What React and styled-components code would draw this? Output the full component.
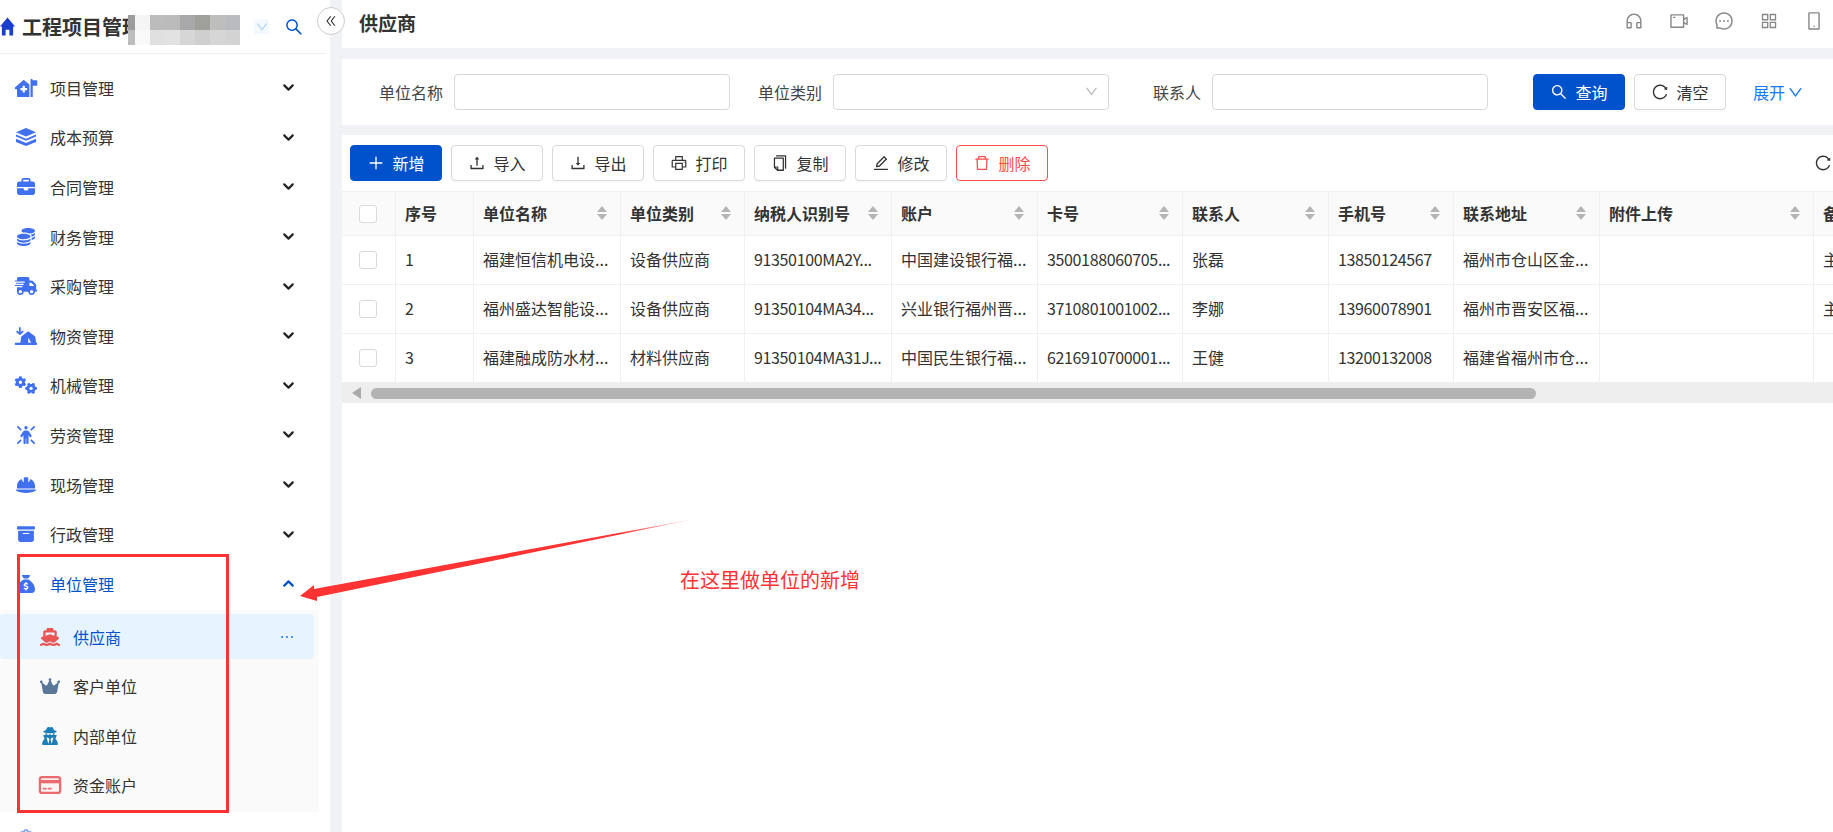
import React from 'react';
import styled, { createGlobalStyle } from 'styled-components';
import {
    AiOutlineCopy, AiOutlineCustomerService, AiOutlineDelete, AiOutlineDoubleLeft, AiOutlineDown,
    AiOutlineDownload, AiOutlineEdit, AiOutlineEllipsis, AiOutlineMessage, AiOutlineMobile, AiOutlinePlus,
    AiOutlinePrinter, AiOutlineReload, AiOutlineSearch, AiOutlineAppstore, AiOutlineUpload, AiOutlineVideoCamera,
} from 'react-icons/ai';
import {
    FaBoxArchive, FaBriefcase, FaClipboard, FaCoins, FaCrown, FaGears, FaHelmetSafety,
    FaHouseMedicalFlag, FaPersonRays, FaSackDollar, FaShip, FaTentArrowDownToLine, FaTruckFast,
    FaUserSecret,
} from 'react-icons/fa6';
import { ChevronDown, ChevronUp } from 'lucide-react';

const HomeGlyph = () => (
    <svg viewBox="0 0 16 19">
        <path d="M8 0 16 9.5H14V19H10V13H6V19H2V9.5H0Z" fill="currentColor" />
    </svg>
);

const BudgetGlyph = () => (
    <svg viewBox="0 0 21 18">
        <path d="M10.5 0 20.5 4.2 10.5 8.4 .5 4.2Z" fill="currentColor" />
        <path d="M.5 6.6 10.5 10.8 20.5 6.6V8.6L10.5 12.8 .5 8.6Z" fill="currentColor" />
        <path d="M.5 10.8 10.5 15 20.5 10.8V14L10.5 18 .5 14Z" fill="currentColor" />
    </svg>
);

const CardGlyph = () => (
    <svg viewBox="0 0 20 16">
        <rect x="1" y="1" width="18" height="14" rx="2" fill="#fdf3f3" stroke="currentColor" strokeWidth="2" />
        <rect x="1" y="3.5" width="18" height="3" fill="currentColor" />
        <rect x="3.5" y="10.5" width="3.5" height="1.5" fill="currentColor" />
        <rect x="8" y="10.5" width="3.5" height="1.5" fill="currentColor" />
    </svg>
);

const menus = [
    { label: '项目管理', icon: FaHouseMedicalFlag },
    { label: '成本预算', icon: BudgetGlyph },
    { label: '合同管理', icon: FaBriefcase },
    { label: '财务管理', icon: FaCoins },
    { label: '采购管理', icon: FaTruckFast },
    { label: '物资管理', icon: FaTentArrowDownToLine },
    { label: '机械管理', icon: FaGears },
    { label: '劳资管理', icon: FaPersonRays },
    { label: '现场管理', icon: FaHelmetSafety },
    { label: '行政管理', icon: FaBoxArchive },
];

const subMenus = [
    { label: '供应商', icon: FaShip, color: '#ea5455', active: true },
    { label: '客户单位', icon: FaCrown, color: '#5a7699' },
    { label: '内部单位', icon: FaUserSecret, color: '#1a7fb8' },
    { label: '资金账户', icon: CardGlyph, color: '#e96a6f' },
];

const mosaic = [
    '#9c9c9c', '#f5f5f5', '#bcbcbc', '#bbbbbb', '#a8a8aa', '#a0a09a', '#bebebc', '#b9bbc0',
    '#bdbdbd', '#f9f9f9', '#e0e0e0', '#e2e2e2', '#d6d6d6', '#cfcfcf', '#d6d6d6', '#d3d3d3',
];

const toolButtons = [
    { label: '导入', icon: AiOutlineUpload },
    { label: '导出', icon: AiOutlineDownload },
    { label: '打印', icon: AiOutlinePrinter },
    { label: '复制', icon: AiOutlineCopy },
    { label: '修改', icon: AiOutlineEdit },
];

const columns = [
    { title: '序号', width: 78 },
    { title: '单位名称', width: 147, sort: true },
    { title: '单位类别', width: 124, sort: true },
    { title: '纳税人识别号', width: 147, sort: true },
    { title: '账户', width: 146, sort: true },
    { title: '卡号', width: 145, sort: true },
    { title: '联系人', width: 146, sort: true },
    { title: '手机号', width: 125, sort: true },
    { title: '联系地址', width: 146, sort: true },
    { title: '附件上传', width: 214, sort: true },
    { title: '备注', width: 146 },
];

const rows = [
    ['1', '福建恒信机电设...', '设备供应商', '91350100MA2Y...', '中国建设银行福...', '3500188060705...', '张磊', '13850124567', '福州市仓山区金...', '', '主要'],
    ['2', '福州盛达智能设...', '设备供应商', '91350104MA34...', '兴业银行福州晋...', '3710801001002...', '李娜', '13960078901', '福州市晋安区福...', '', '主要'],
    ['3', '福建融成防水材...', '材料供应商', '91350104MA31J...', '中国民生银行福...', '6216910700001...', '王健', '13200132008', '福建省福州市仓...', '', ''],
];

export default function App() {
    return (
        <Page>
            <GlobalStyle />
            <Sidebar>
                <Brand>
                    <BrandHome><HomeGlyph /></BrandHome>
                    <BrandTitle>工程项目管理</BrandTitle>
                    <Mosaic>
                        {mosaic.map((c, i) => <MosaicCell key={i} $color={c} />)}
                    </Mosaic>
                    <BrandChevron><AiOutlineDown /></BrandChevron>
                    <BrandSearch><AiOutlineSearch /></BrandSearch>
                </Brand>
                <Menu>
                    {menus.map(m => (
                        <MenuRow key={m.label}>
                            <MenuIcon><m.icon /></MenuIcon>
                            <MenuText>{m.label}</MenuText>
                            <ChevronDown size={17} strokeWidth={3} color="#222" />
                        </MenuRow>
                    ))}
                    <MenuRow $open>
                        <MenuIcon><FaSackDollar /></MenuIcon>
                        <MenuText>单位管理</MenuText>
                        <ChevronUp size={17} strokeWidth={3} color="#0052cc" />
                    </MenuRow>
                    <SubList>
                        {subMenus.map(s => (
                            <SubRow key={s.label} $active={s.active}>
                                <SubIcon $color={s.color}><s.icon /></SubIcon>
                                <MenuText>{s.label}</MenuText>
                                {s.active && <SubMore><AiOutlineEllipsis /></SubMore>}
                            </SubRow>
                        ))}
                    </SubList>
                    <LastIcon><FaClipboard /></LastIcon>
                </Menu>
            </Sidebar>
            <Main>
                <TopBar>
                    <PageTitle>供应商</PageTitle>
                    <TopIcons>
                        <AiOutlineCustomerService />
                        <AiOutlineVideoCamera />
                        <AiOutlineMessage />
                        <AiOutlineAppstore />
                        <AiOutlineMobile />
                    </TopIcons>
                </TopBar>
                <FilterCard>
                    <FormItem>
                        <FormLabel>单位名称</FormLabel>
                        <FormInput />
                    </FormItem>
                    <FormItem>
                        <FormLabel>单位类别</FormLabel>
                        <FormInput as="div">
                            <SelectArrow><AiOutlineDown /></SelectArrow>
                        </FormInput>
                    </FormItem>
                    <FormItem>
                        <FormLabel>联系人</FormLabel>
                        <FormInput />
                    </FormItem>
                    <QueryButton $primary><AiOutlineSearch />查询</QueryButton>
                    <Button><AiOutlineReload />清空</Button>
                    <Expand>展开<AiOutlineDown /></Expand>
                </FilterCard>
                <TablePanel>
                    <Toolbar>
                        <Button $primary><AiOutlinePlus />新增</Button>
                        {toolButtons.map(b => (
                            <Button key={b.label}><b.icon />{b.label}</Button>
                        ))}
                        <Button $danger><AiOutlineDelete />删除</Button>
                        <ToolRefresh><AiOutlineReload /></ToolRefresh>
                    </Toolbar>
                    <TableClip>
                        <Table>
                            <colgroup>
                                <col style={{ width: 54 }} />
                                {columns.map(c => <col key={c.title} style={{ width: c.width }} />)}
                            </colgroup>
                            <thead>
                                <tr>
                                    <HeadCell><CheckBox /></HeadCell>
                                    {columns.map(c => (
                                        <HeadCell key={c.title}>
                                            <HeadInner>
                                                {c.title}
                                                {c.sort && <Sorter><SortUp /><SortDown /></Sorter>}
                                            </HeadInner>
                                        </HeadCell>
                                    ))}
                                </tr>
                            </thead>
                            <tbody>
                                {rows.map(r => (
                                    <tr key={r[0]}>
                                        <BodyCell><CheckBox /></BodyCell>
                                        {r.map((v, i) => <BodyCell key={i} $digits={/^\d/.test(v)}>{v}</BodyCell>)}
                                    </tr>
                                ))}
                            </tbody>
                        </Table>
                    </TableClip>
                    <ScrollTrack>
                        <ScrollArrow />
                        <ScrollThumb />
                    </ScrollTrack>
                </TablePanel>
            </Main>
            <CollapseButton><AiOutlineDoubleLeft /></CollapseButton>
            <RedBox />
            <ArrowDrawing viewBox="0 0 1833 832">
                <defs>
                    <linearGradient id="tail" gradientUnits="userSpaceOnUse" x1="300" y1="596" x2="700" y2="518">
                        <stop offset="0.8" stopColor="#f33" />
                        <stop offset="1" stopColor="#f33" stopOpacity="0" />
                    </linearGradient>
                </defs>
                <polygon points="300,596 314,585 314,589 700,518 317,597 317,601" fill="url(#tail)" />
            </ArrowDrawing>
            <Note>在这里做单位的新增</Note>
        </Page>
    );
}

const GlobalStyle = createGlobalStyle`
html, body {
    margin: 0;
    height: 100%;
    overflow: hidden;
    background: #fff;
}
* {
    box-sizing: border-box;
}
`

const Page = styled.div`
position: relative;
display: flex;
width: 100vw;
height: 100vh;
overflow: hidden;
font-family: "Noto Sans CJK SC", "Noto Sans", sans-serif;
font-size: 16px;
color: #333;
`

const Sidebar = styled.div`
flex: 0 0 330px;
height: 100%;
overflow: hidden;
background: #fff;
`

const Brand = styled.div`
position: relative;
display: flex;
align-items: center;
width: 326px;
height: 54px;
border-bottom: 1px solid #f0f0f0;
`

const BrandHome = styled.span`
display: flex;
flex: 0 0 22px;
color: #1a3fd0;
svg {
    width: 15px;
    height: 19px;
}
`

const BrandTitle = styled.span`
flex: 1;
font-size: 20px;
font-weight: 700;
color: #333;
white-space: nowrap;
`

const Mosaic = styled.div`
position: absolute;
left: 128px;
top: 15px;
display: grid;
grid-template-columns: 7px repeat(7, 15px);
grid-auto-rows: 15px;
`

const MosaicCell = styled.div`
background: ${props => props.$color};
`

const BrandChevron = styled.span`
display: flex;
align-items: center;
justify-content: center;
width: 15px;
height: 15px;
margin-right: 15px;
font-size: 14px;
color: #a8d0f5;
background: #f3f9ff;
`

const BrandSearch = styled.span`
display: flex;
margin-right: 22px;
font-size: 20px;
color: #0052cc;
`

const Menu = styled.div`
padding-top: 9px;
width: 319px;
`

const MenuRow = styled.div`
display: flex;
align-items: center;
height: 49.6px;
padding: 0 22px 0 14px;
color: ${props => props.$open ? '#0052cc' : '#333'};
`

const MenuIcon = styled.span`
display: flex;
justify-content: center;
flex: 0 0 24px;
margin-right: 13px;
color: #4070f0;
svg {
    width: 24px;
    height: 18px;
}
`

const MenuText = styled.span`
flex: 1;
line-height: 20px;
margin-left: -1px;
`

const SubList = styled.div`
margin-top: 1.4px;
padding: 4px 5px 4px 0;
height: 202px;
background: #fafafa;
`

const SubRow = styled.div`
display: flex;
align-items: center;
height: 45px;
margin-bottom: 4.4px;
padding: 1px 18px 0 38px;
border-radius: 4px;
color: ${props => props.$active ? '#0052cc' : '#333'};
background: ${props => props.$active ? '#e6f4ff' : 'transparent'};
`

const SubIcon = styled.span`
display: flex;
justify-content: center;
flex: 0 0 24px;
margin-right: 12px;
color: ${props => props.$color};
svg {
    width: 24px;
    height: 18px;
}
`

const SubMore = styled.span`
display: flex;
font-size: 18px;
color: #1677ff;
`

const LastIcon = styled.div`
display: flex;
padding: 17px 0 0 18px;
font-size: 16px;
color: #8ea9f0;
`

const Main = styled.div`
flex: 1;
min-width: 0;
display: flex;
flex-direction: column;
height: 100%;
border-left: 12px solid #f0f2f5;
background: #f0f2f5;
`

const TopBar = styled.div`
display: flex;
align-items: center;
justify-content: space-between;
flex: 0 0 48px;
padding: 0 9px 4px 17px;
background: #fff;
`

const PageTitle = styled.div`
font-size: 19px;
font-weight: 700;
color: #333;
`

const TopIcons = styled.div`
display: flex;
align-items: center;
gap: 25px;
margin-top: -2px;
font-size: 20px;
color: #888;
`

const FilterCard = styled.div`
display: flex;
align-items: center;
flex: 0 0 66px;
margin-top: 11px;
padding-left: 9px;
background: #fff;
`

const FormItem = styled.div`
display: flex;
align-items: center;
width: 379px;
`

const FormLabel = styled.label`
flex: 1;
margin-right: 11px;
text-align: right;
color: #444;
`

const FormInput = styled.input`
position: relative;
flex: 0 0 276px;
height: 36px;
padding: 0 10px;
border: 1px solid #d9d9d9;
border-radius: 4px;
background: #fff;
outline: none;
`

const SelectArrow = styled.span`
position: absolute;
right: 9px;
top: 9px;
display: flex;
font-size: 15px;
color: #bbb;
`

const Button = styled.div`
display: flex;
align-items: center;
justify-content: center;
gap: 7px;
flex: 0 0 92px;
height: 36px;
padding-bottom: 1px;
border: 1px solid ${props => props.$primary ? '#0052cc' : props.$danger ? '#ff4d4f' : '#d9d9d9'};
border-radius: 4px;
color: ${props => props.$primary ? '#fff' : props.$danger ? '#ff4d4f' : '#333'};
background: ${props => props.$primary ? '#0052cc' : '#fff'};
box-shadow: 0 2px 0 rgba(0, 0, 0, 0.02);
font-size: 16px;
svg {
    font-size: 18px;
}
`

const QueryButton = styled(Button)`
margin: 0 9px 0 45px;
`

const Expand = styled.div`
display: flex;
align-items: center;
gap: 2px;
margin-left: 27px;
color: #1677ff;
svg {
    font-size: 17px;
}
`

const TablePanel = styled.div`
flex: 1;
min-height: 0;
margin-top: 10px;
background: #fff;
`

const Toolbar = styled.div`
display: flex;
align-items: center;
gap: 9px;
height: 56px;
padding: 0 1px 0 8px;
`

const ToolRefresh = styled.span`
display: flex;
margin-left: auto;
font-size: 18px;
color: #333;
`

const TableClip = styled.div`
overflow: hidden;
`

const Table = styled.table`
width: 1618px;
table-layout: fixed;
border-collapse: separate;
border-spacing: 0;
`

const HeadCell = styled.th`
height: 45px;
padding: 0 10px 1px 9px;
border-top: 1px solid #f0f0f0;
border-right: 1px solid #f0f0f0;
border-bottom: 1px solid #f0f0f0;
background: #fafafa;
font-size: 16px;
font-weight: 700;
color: #333;
text-align: left;
&:first-child {
    padding: 0 0 0 17px;
}
`

const HeadInner = styled.div`
display: flex;
align-items: center;
justify-content: space-between;
padding-right: 2px;
white-space: nowrap;
`

const Sorter = styled.span`
display: flex;
flex-direction: column;
gap: 2px;
margin-right: 1px;
`

const SortUp = styled.i`
display: block;
border-left: 5px solid transparent;
border-right: 5px solid transparent;
border-bottom: 6px solid #b5b5b5;
`

const SortDown = styled.i`
display: block;
border-left: 5px solid transparent;
border-right: 5px solid transparent;
border-top: 6px solid #b5b5b5;
`

const BodyCell = styled.td`
height: 49px;
padding: 0 10px 2px 9px;
border-right: 1px solid #f0f0f0;
border-bottom: 1px solid #f0f0f0;
color: #333;
white-space: nowrap;
overflow: hidden;
letter-spacing: ${props => props.$digits ? '-0.35px' : 'normal'};
&:first-child {
    padding: 0 0 0 17px;
}
`

const CheckBox = styled.span`
display: block;
width: 18px;
height: 18px;
border: 1px solid #d9d9d9;
border-radius: 3px;
background: #fff;
`

const ScrollTrack = styled.div`
display: flex;
align-items: center;
height: 20px;
padding-left: 10px;
background: #eee;
`

const ScrollArrow = styled.i`
display: block;
margin-right: 10px;
border-top: 6px solid transparent;
border-bottom: 6px solid transparent;
border-right: 9px solid #aaa;
`

const ScrollThumb = styled.div`
width: 1165px;
height: 11px;
border-radius: 6px;
background: #b3b3b3;
`

const CollapseButton = styled.div`
position: absolute;
left: 317px;
top: 7px;
display: flex;
align-items: center;
justify-content: center;
width: 28px;
height: 28px;
border: 1px solid #ccc;
border-radius: 50%;
background: #fff;
font-size: 14px;
color: #333;
`

const RedBox = styled.div`
position: absolute;
left: 17px;
top: 554px;
width: 212px;
height: 259px;
border: 3px solid #f33;
pointer-events: none;
`

const ArrowDrawing = styled.svg`
position: absolute;
left: 0;
top: 0;
width: 1833px;
height: 832px;
pointer-events: none;
`

const Note = styled.div`
position: absolute;
left: 680px;
top: 566px;
font-size: 20px;
line-height: 28px;
color: #f33;
white-space: nowrap;
`
